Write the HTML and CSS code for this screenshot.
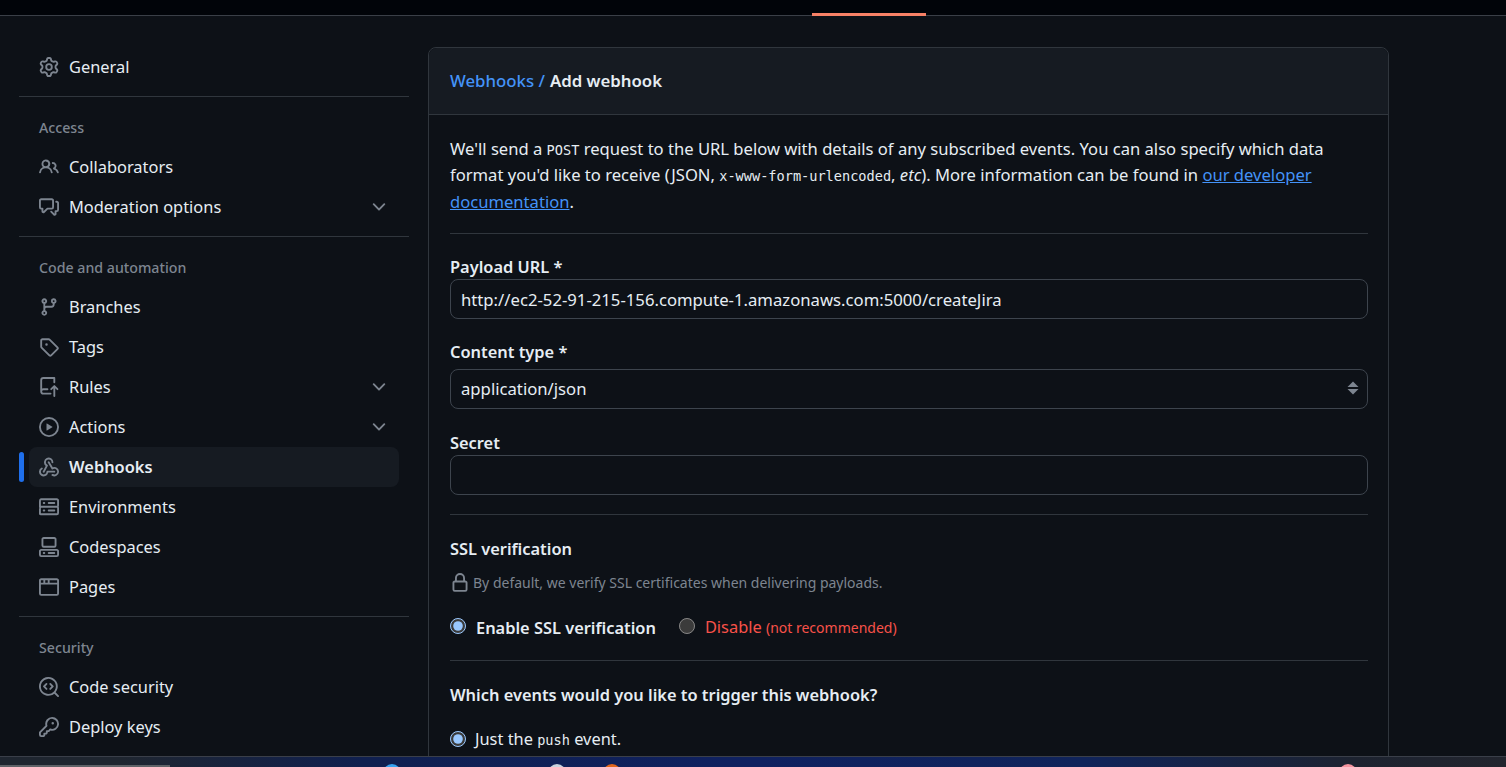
FILE: index.html
```html
<!DOCTYPE html>
<html lang="en">

<head>
    <meta charset="UTF-8">
    <meta name="viewport" content="width=device-width, initial-scale=1.0">
    <title>Add webhook</title>
    <link rel="stylesheet" href="styles.css">
</head>

<body>
    <header class="topbar">
        <span class="tab-marker"></span>
    </header>

    <div class="layout">
        <nav class="sidebar">
            <a class="nav-item" href="#">
                <svg class="icon" viewBox="0 0 16 16"><path d="M8 0a8.2 8.2 0 0 1 .701.031C9.444.095 9.99.645 10.16 1.29l.288 1.107c.018.066.079.158.212.224.231.114.454.243.668.386.123.082.233.09.299.071l1.103-.303c.644-.176 1.392.021 1.82.63.27.385.506.792.704 1.218.315.675.111 1.422-.364 1.891l-.814.806c-.049.048-.098.147-.088.294.016.257.016.515 0 .772-.01.147.038.246.088.294l.814.806c.475.469.679 1.216.364 1.891a7.977 7.977 0 0 1-.704 1.217c-.428.61-1.176.807-1.82.63l-1.102-.302c-.067-.019-.177-.011-.3.071a5.909 5.909 0 0 1-.668.386c-.133.066-.194.158-.211.224l-.29 1.106c-.168.646-.715 1.196-1.458 1.26a8.006 8.006 0 0 1-1.402 0c-.743-.064-1.289-.614-1.458-1.26l-.289-1.106c-.018-.066-.079-.158-.212-.224a5.738 5.738 0 0 1-.668-.386c-.123-.082-.233-.09-.299-.071l-1.103.303c-.644.176-1.392-.021-1.82-.63a8.12 8.12 0 0 1-.704-1.218c-.315-.675-.111-1.422.363-1.891l.815-.806c.05-.048.098-.147.088-.294a6.214 6.214 0 0 1 0-.772c.01-.147-.038-.246-.088-.294l-.815-.806C.635 6.045.431 5.298.746 4.623a7.92 7.92 0 0 1 .704-1.217c.428-.61 1.176-.807 1.82-.63l1.102.302c.067.019.177.011.3-.071.214-.143.437-.272.668-.386.133-.066.194-.158.211-.224l.29-1.106C6.009.645 6.556.095 7.299.03 7.53.01 7.764 0 8 0Zm-.571 1.525c-.036.003-.108.036-.137.146l-.289 1.105c-.147.561-.549.967-.998 1.189-.173.086-.34.183-.5.29-.417.278-.97.423-1.529.27l-1.103-.303c-.109-.03-.175.016-.195.045-.22.312-.412.644-.573.99-.014.031-.021.11.059.19l.815.806c.411.406.562.957.53 1.456a4.709 4.709 0 0 0 0 .582c.032.499-.119 1.05-.53 1.456l-.815.806c-.081.08-.073.159-.059.19.162.346.353.677.573.989.02.03.085.076.195.046l1.102-.303c.56-.153 1.113-.008 1.53.27.161.107.328.204.501.29.447.222.85.629.997 1.189l.289 1.105c.029.109.101.143.137.146a6.6 6.6 0 0 0 1.142 0c.036-.003.108-.036.137-.146l.289-1.105c.147-.561.549-.967.998-1.189.173-.086.34-.183.5-.29.417-.278.97-.423 1.529-.27l1.103.303c.109.029.175-.016.195-.045.22-.313.411-.644.573-.99.014-.031.021-.11-.059-.19l-.815-.806c-.411-.406-.562-.957-.53-1.456a4.709 4.709 0 0 0 0-.582c-.032-.499.119-1.05.53-1.456l.815-.806c.081-.08.073-.159.059-.19a6.464 6.464 0 0 0-.573-.989c-.02-.03-.085-.076-.195-.046l-1.102.303c-.56.153-1.113.008-1.53-.27a4.44 4.44 0 0 0-.501-.29c-.447-.222-.85-.629-.997-1.189l-.289-1.105c-.029-.11-.101-.143-.137-.146a6.6 6.6 0 0 0-1.142 0ZM11 8a3 3 0 1 1-6 0 3 3 0 0 1 6 0ZM9.5 8a1.5 1.5 0 1 0-3.001.001A1.5 1.5 0 0 0 9.5 8Z"/></svg>
                General
            </a>
            <hr class="nav-divider">

            <h2 class="nav-heading">Access</h2>
            <a class="nav-item" href="#">
                <svg class="icon" viewBox="0 0 16 16"><path d="M2 5.5a3.5 3.5 0 1 1 5.898 2.549 5.508 5.508 0 0 1 3.034 4.084.75.75 0 1 1-1.482.235 4 4 0 0 0-7.9 0 .75.75 0 0 1-1.482-.236A5.507 5.507 0 0 1 3.102 8.05 3.493 3.493 0 0 1 2 5.5ZM11 4a3.001 3.001 0 0 1 2.22 5.018 5.01 5.01 0 0 1 2.56 3.012.749.749 0 0 1-.885.954.752.752 0 0 1-.549-.514 3.507 3.507 0 0 0-2.522-2.372.75.75 0 0 1-.574-.73v-.352a.75.75 0 0 1 .416-.672A1.5 1.5 0 0 0 11 5.5.75.75 0 0 1 11 4Zm-5.5-.5a2 2 0 1 0-.001 3.999A2 2 0 0 0 5.5 3.5Z"/></svg>
                Collaborators
            </a>
            <a class="nav-item" href="#">
                <svg class="icon" viewBox="0 0 16 16"><path d="M1.75 1h8.5c.966 0 1.75.784 1.75 1.75v5.5A1.75 1.75 0 0 1 10.25 10H7.061l-2.574 2.573A1.458 1.458 0 0 1 2 11.543V10h-.25A1.75 1.75 0 0 1 0 8.25v-5.5C0 1.784.784 1 1.75 1ZM1.5 2.75v5.5c0 .138.112.25.25.25h1a.75.75 0 0 1 .75.75v2.19l2.72-2.72a.749.749 0 0 1 .53-.22h3.5a.25.25 0 0 0 .25-.25v-5.5a.25.25 0 0 0-.25-.25h-8.5a.25.25 0 0 0-.25.25Zm13 2a.25.25 0 0 0-.25-.25h-.5a.75.75 0 0 1 0-1.5h.5c.966 0 1.75.784 1.75 1.75v5.5A1.75 1.75 0 0 1 14.25 12H14v1.543a1.458 1.458 0 0 1-2.487 1.03L9.22 12.28a.749.749 0 0 1 .326-1.275.749.749 0 0 1 .734.215l2.22 2.22v-2.19a.75.75 0 0 1 .75-.75h1a.25.25 0 0 0 .25-.25Z"/></svg>
                Moderation options
                <svg class="icon chevron" viewBox="0 0 16 16"><path d="M12.78 5.22a.749.749 0 0 1 0 1.06l-4.25 4.25a.749.749 0 0 1-1.06 0L3.22 6.28a.749.749 0 1 1 1.06-1.06L8 8.939l3.72-3.719a.749.749 0 0 1 1.06 0Z"/></svg>
            </a>
            <hr class="nav-divider">

            <h2 class="nav-heading">Code and automation</h2>
            <a class="nav-item" href="#">
                <svg class="icon" viewBox="0 0 16 16"><path d="M9.5 3.25a2.25 2.25 0 1 1 3 2.122V6A2.5 2.5 0 0 1 10 8.5H6a1 1 0 0 0-1 1v1.128a2.251 2.251 0 1 1-1.5 0V5.372a2.25 2.25 0 1 1 1.5 0v1.836A2.493 2.493 0 0 1 6 7h4a1 1 0 0 0 1-1v-.628A2.25 2.25 0 0 1 9.5 3.25Zm-6 0a.75.75 0 1 0 1.5 0 .75.75 0 0 0-1.5 0Zm8.25-.75a.75.75 0 1 0 0 1.5.75.75 0 0 0 0-1.5ZM4.25 12a.75.75 0 1 0 0 1.5.75.75 0 0 0 0-1.5Z"/></svg>
                Branches
            </a>
            <a class="nav-item" href="#">
                <svg class="icon" viewBox="0 0 16 16"><path d="M1 7.775V2.75C1 1.784 1.784 1 2.75 1h5.025c.464 0 .91.184 1.238.513l6.25 6.25a1.75 1.75 0 0 1 0 2.474l-5.026 5.026a1.75 1.75 0 0 1-2.474 0l-6.25-6.25A1.752 1.752 0 0 1 1 7.775Zm1.5 0c0 .066.026.13.073.177l6.25 6.25a.25.25 0 0 0 .354 0l5.025-5.025a.25.25 0 0 0 0-.354l-6.25-6.25a.25.25 0 0 0-.177-.073H2.75a.25.25 0 0 0-.25.25ZM6 5a1 1 0 1 1 0 2 1 1 0 0 1 0-2Z"/></svg>
                Tags
            </a>
            <a class="nav-item" href="#">
                <svg class="icon" viewBox="0 0 16 16"><path d="M1 2.5A2.5 2.5 0 0 1 3.5 0h8.75a.75.75 0 0 1 .75.75v3.5a.75.75 0 0 1-1.5 0V1.5h-8a1 1 0 0 0-1 1v6.708A2.493 2.493 0 0 1 3.5 9h3.25a.75.75 0 0 1 0 1.5H3.5a1 1 0 0 0 0 2h5.75a.75.75 0 0 1 0 1.5H3.5A2.5 2.5 0 0 1 1 11.5Zm13.23 7.79h-.001l-1.224-1.224v6.184a.75.75 0 0 1-1.5 0V9.066L10.28 10.29a.75.75 0 0 1-1.06-1.061l2.505-2.504a.75.75 0 0 1 1.06 0L15.29 9.23a.751.751 0 0 1-.018 1.042.751.751 0 0 1-1.042.018Z"/></svg>
                Rules
                <svg class="icon chevron" viewBox="0 0 16 16"><path d="M12.78 5.22a.749.749 0 0 1 0 1.06l-4.25 4.25a.749.749 0 0 1-1.06 0L3.22 6.28a.749.749 0 1 1 1.06-1.06L8 8.939l3.72-3.719a.749.749 0 0 1 1.06 0Z"/></svg>
            </a>
            <a class="nav-item" href="#">
                <svg class="icon" viewBox="0 0 16 16"><path d="M8 0a8 8 0 1 1 0 16A8 8 0 0 1 8 0ZM1.5 8a6.5 6.5 0 1 0 13 0 6.5 6.5 0 0 0-13 0Zm4.879-2.773 4.264 2.559a.25.25 0 0 1 0 .428l-4.264 2.559A.25.25 0 0 1 6 10.559V5.442a.25.25 0 0 1 .379-.215Z"/></svg>
                Actions
                <svg class="icon chevron" viewBox="0 0 16 16"><path d="M12.78 5.22a.749.749 0 0 1 0 1.06l-4.25 4.25a.749.749 0 0 1-1.06 0L3.22 6.28a.749.749 0 1 1 1.06-1.06L8 8.939l3.72-3.719a.749.749 0 0 1 1.06 0Z"/></svg>
            </a>
            <a class="nav-item active" href="#">
                <svg class="icon" viewBox="0 0 16 16"><path d="M5.5 4.25a2.25 2.25 0 0 1 4.5 0 .75.75 0 0 0 1.5 0 3.75 3.75 0 1 0-6.14 2.889l-2.272 4.258a.75.75 0 0 0 1.324.706L7 7.25a.75.75 0 0 0-.309-1.015A2.25 2.25 0 0 1 5.5 4.25Z"/><path d="M7.364 3.607a.75.75 0 0 1 1.03.257l2.608 4.349a3.75 3.75 0 1 1-.628 6.785.75.75 0 0 1 .752-1.299 2.25 2.25 0 1 0-.033-3.88.75.75 0 0 1-1.03-.256L7.107 4.636a.75.75 0 0 1 .257-1.03Z"/><path d="M2.9 8.776A.75.75 0 0 1 2.625 9.8 2.25 2.25 0 1 0 6 11.75a.75.75 0 0 1 .75-.751h5.5a.75.75 0 0 1 0 1.5H7.425a3.751 3.751 0 1 1-5.55-3.998.75.75 0 0 1 1.024.274Z"/></svg>
                Webhooks
            </a>
            <a class="nav-item" href="#">
                <svg class="icon" viewBox="0 0 16 16"><path d="M1.75 1h12.5c.966 0 1.75.784 1.75 1.75v4c0 .372-.116.717-.314 1 .198.283.314.628.314 1v4a1.75 1.75 0 0 1-1.75 1.75H1.75A1.75 1.75 0 0 1 0 13.75v-4c0-.372.116-.717.314-1a1.739 1.739 0 0 1-.314-1v-4C0 1.784.784 1 1.75 1ZM1.5 2.75v4c0 .138.112.25.25.25h12.5a.25.25 0 0 0 .25-.25v-4a.25.25 0 0 0-.25-.25H1.75a.25.25 0 0 0-.25.25Zm.25 5.75a.25.25 0 0 0-.25.25v4c0 .138.112.25.25.25h12.5a.25.25 0 0 0 .25-.25v-4a.25.25 0 0 0-.25-.25ZM7 4.75A.75.75 0 0 1 7.75 4h4.5a.75.75 0 0 1 0 1.5h-4.5A.75.75 0 0 1 7 4.75ZM7.75 10h4.5a.75.75 0 0 1 0 1.5h-4.5a.75.75 0 0 1 0-1.5ZM3 4.75A.75.75 0 0 1 3.75 4h.5a.75.75 0 0 1 0 1.5h-.5A.75.75 0 0 1 3 4.75ZM3.75 10h.5a.75.75 0 0 1 0 1.5h-.5a.75.75 0 0 1 0-1.5Z"/></svg>
                Environments
            </a>
            <a class="nav-item" href="#">
                <svg class="icon" viewBox="0 0 16 16"><path d="M0 11.25c0-.966.784-1.75 1.75-1.75h12.5c.966 0 1.75.784 1.75 1.75v3A1.75 1.75 0 0 1 14.25 16H1.75A1.75 1.75 0 0 1 0 14.25Zm2-9.5C2 .784 2.784 0 3.75 0h8.5C13.216 0 14 .784 14 1.75v5a1.75 1.75 0 0 1-1.75 1.75h-8.5A1.75 1.75 0 0 1 2 6.75Zm1.75-.25a.25.25 0 0 0-.25.25v5c0 .138.112.25.25.25h8.5a.25.25 0 0 0 .25-.25v-5a.25.25 0 0 0-.25-.25Zm-2 9.5a.25.25 0 0 0-.25.25v3c0 .138.112.25.25.25h12.5a.25.25 0 0 0 .25-.25v-3a.25.25 0 0 0-.25-.25Z"/><path d="M7 12.75a.75.75 0 0 1 .75-.75h4.5a.75.75 0 0 1 0 1.5h-4.5a.75.75 0 0 1-.75-.75Zm-4 0a.75.75 0 0 1 .75-.75h.5a.75.75 0 0 1 0 1.5h-.5a.75.75 0 0 1-.75-.75Z"/></svg>
                Codespaces
            </a>
            <a class="nav-item" href="#">
                <svg class="icon" viewBox="0 0 16 16"><path d="M0 2.75C0 1.784.784 1 1.75 1h12.5c.966 0 1.75.784 1.75 1.75v10.5A1.75 1.75 0 0 1 14.25 15H1.75A1.75 1.75 0 0 1 0 13.25ZM14.5 6h-13v7.25c0 .138.112.25.25.25h12.5a.25.25 0 0 0 .25-.25Zm-6-3.5v2h6V2.75a.25.25 0 0 0-.25-.25ZM5 2.5v2h2v-2Zm-3.25 0a.25.25 0 0 0-.25.25V4.5h2v-2Z"/></svg>
                Pages
            </a>
            <hr class="nav-divider">

            <h2 class="nav-heading">Security</h2>
            <a class="nav-item" href="#">
                <svg class="icon" viewBox="0 0 16 16"><path d="M8.47 4.97a.75.75 0 0 0 0 1.06L9.94 7.5 8.47 8.97a.75.75 0 1 0 1.06 1.06l2-2a.75.75 0 0 0 0-1.06l-2-2a.75.75 0 0 0-1.06 0ZM6.53 6.03a.75.75 0 0 0-1.06-1.06l-2 2a.75.75 0 0 0 0 1.06l2 2a.75.75 0 1 0 1.06-1.06L5.06 7.5l1.47-1.47Z"/><path d="M12.246 13.307a7.501 7.501 0 1 1 1.06-1.06l2.474 2.473a.749.749 0 0 1-.326 1.275.749.749 0 0 1-.734-.215ZM1.5 7.5a6.002 6.002 0 0 0 3.664 5.53 6.002 6.002 0 0 0 6.575-1.3A6 6 0 1 0 1.5 7.5Z"/></svg>
                Code security
            </a>
            <a class="nav-item" href="#">
                <svg class="icon" viewBox="0 0 16 16"><path d="M10.5 0a5.499 5.499 0 1 1-1.288 10.848l-.932.932a.749.749 0 0 1-.53.22H7v.75a.749.749 0 0 1-.22.53l-.5.5a.749.749 0 0 1-.53.22H5v.75a.749.749 0 0 1-.22.53l-.5.5a.749.749 0 0 1-.53.22h-2A1.75 1.75 0 0 1 0 14.25v-2c0-.199.079-.389.22-.53l4.932-4.932A5.5 5.5 0 0 1 10.5 0Zm-4 5.5c-.001.431.069.86.205 1.269a.75.75 0 0 1-.181.768L1.5 12.56v1.69c0 .138.112.25.25.25h1.69l.06-.06v-1.19a.75.75 0 0 1 .75-.75h1.19l.06-.06v-1.19a.75.75 0 0 1 .75-.75h1.19l1.023-1.025a.75.75 0 0 1 .768-.18A4 4 0 1 0 6.5 5.5ZM11 6a1 1 0 1 1 0-2 1 1 0 0 1 0 2Z"/></svg>
                Deploy keys
            </a>
        </nav>

        <main class="card">
            <div class="card-header">
                <a class="crumb" href="#">Webhooks /</a> <span class="crumb-current">Add webhook</span>
            </div>

            <form class="card-body">
                <p class="intro">We'll send a <code>POST</code> request to the URL below with details of any subscribed events. You can also specify which data format you'd like to receive (JSON, <code>x-www-form-urlencoded</code>, <em>etc</em>). More information can be found in <a href="#">our developer documentation</a>.</p>
                <hr class="section-divider">

                <label class="field-label" for="payload-url">Payload URL *</label>
                <input class="field" type="text" id="payload-url" value="http://ec2-52-91-215-156.compute-1.amazonaws.com:5000/createJira">

                <label class="field-label" for="content-type">Content type *</label>
                <div class="select-wrap">
                    <select class="field" id="content-type">
                        <option>application/json</option>
                    </select>
                    <svg class="select-arrows" viewBox="0 0 12 14"><path d="M6 0.5 11.5 6H0.5Z"/><path d="M6 13.5 0.5 8H11.5Z"/></svg>
                </div>

                <label class="field-label" for="secret">Secret</label>
                <input class="field" type="text" id="secret">
                <hr class="section-divider">

                <h3 class="section-title">SSL verification</h3>
                <p class="note">
                    <svg class="icon" viewBox="0 0 16 16"><path d="M4 4a4 4 0 0 1 8 0v2h.25c.966 0 1.75.784 1.75 1.75v5.5A1.75 1.75 0 0 1 12.25 15h-8.5A1.75 1.75 0 0 1 2 13.25v-5.5C2 6.784 2.784 6 3.75 6H4Zm8.25 3.5h-8.5a.25.25 0 0 0-.25.25v5.5c0 .138.112.25.25.25h8.5a.25.25 0 0 0 .25-.25v-5.5a.25.25 0 0 0-.25-.25ZM10.5 6V4a2.5 2.5 0 1 0-5 0v2Z"/></svg>
                    By default, we verify SSL certificates when delivering payloads.
                </p>
                <div class="radio-row">
                    <label class="radio strong"><input type="radio" name="ssl" checked> <span>Enable SSL verification</span></label>
                    <label class="radio danger"><input type="radio" name="ssl"> <span>Disable <small>(not recommended)</small></span></label>
                </div>
                <hr class="section-divider">

                <h3 class="section-title">Which events would you like to trigger this webhook?</h3>
                <label class="radio event"><input type="radio" name="events" checked> <span>Just the <code>push</code> event.</span></label>
            </form>
        </main>
    </div>

    <footer class="taskbar">
        <span class="task-strip"></span>
        <span class="task-dot dot-blue"></span>
        <span class="task-dot dot-white"></span>
        <span class="task-dot dot-orange"></span>
        <span class="task-dot dot-pink"></span>
    </footer>
</body>

</html>
```
FILE: styles.css
```css
/* General Body Styling */
html,
body {
    height: 100%;
}

body {
    margin: 0;
    display: flex;
    flex-direction: column;
    overflow: hidden;
    background: #0d1117;
    color: #e6edf3;
    font-family: "Noto Sans", sans-serif;
    font-size: 16.4px;
    line-height: 26.25px;
    color-scheme: dark;
}

a {
    text-decoration: none;
}

code {
    font-family: "DejaVu Sans Mono", monospace;
    font-size: 13.6px;
    line-height: 1;
}

/* Top Bar */
.topbar {
    flex: none;
    height: 15px;
    background: #010409;
    border-bottom: 1px solid #3a3f47;
    display: flex;
    align-items: flex-end;
    padding-left: 812px;
}

.tab-marker {
    width: 114px;
    height: 3px;
    margin-bottom: -1px;
    background: #f78166;
}

/* Page Layout */
.layout {
    flex: 1;
    min-height: 0;
    display: flex;
    align-items: flex-start;
    gap: 19px;
    padding: 31px 0 0 19px;
    overflow: hidden;
}

/* Sidebar */
.sidebar {
    flex: none;
    width: 390px;
}

.nav-item {
    position: relative;
    display: flex;
    align-items: center;
    gap: 10px;
    height: 40px;
    margin: 0 10px;
    padding: 0 10px;
    border-radius: 8px;
    color: #e6edf3;
}

.nav-item.active {
    background: #161b22;
    font-weight: 600;
}

.nav-item.active::before {
    content: "";
    position: absolute;
    left: -10px;
    top: 5px;
    width: 5px;
    height: 30px;
    border-radius: 3px;
    background: #1f6feb;
}

.icon {
    flex: none;
    width: 20px;
    height: 20px;
    fill: #7d8590;
}

.chevron {
    margin-left: auto;
}

.nav-divider {
    height: 1px;
    margin: 9px 0 0;
    border: 0;
    background: #30363d;
}

.nav-heading {
    margin: 0;
    padding: 21px 20px 9px;
    color: #7d8590;
    font-size: 14.2px;
    font-weight: 500;
    line-height: 20px;
}

/* Card */
.card {
    flex: none;
    width: 959px;
    height: 1000px;
    border: 1px solid #30363d;
    border-radius: 8px;
}

.card-header {
    height: 66px;
    padding: 0 20px 0 21px;
    display: flex;
    align-items: center;
    gap: 5px;
    background: #161b22;
    border-bottom: 1px solid #30363d;
    border-radius: 8px 8px 0 0;
    font-size: 16.8px;
}

.crumb {
    color: #4493f8;
    font-weight: 500;
}

.crumb-current {
    font-weight: 600;
}

.card-body {
    padding: 21px 20px 21px 21px;
}

.intro {
    margin: 0;
    font-size: 16.6px;
}

.intro a {
    color: #4493f8;
    text-decoration: underline;
}

.intro em {
    font-style: italic;
}

.section-divider {
    height: 1px;
    margin: 19px 0 0;
    border: 0;
    background: #30363d;
}

.intro + .section-divider {
    margin-top: 18px;
}

/* Form Fields */
.field-label {
    display: block;
    margin-top: 20px;
    font-weight: 600;
}

.field {
    display: block;
    box-sizing: border-box;
    width: 100%;
    height: 40px;
    margin-top: -1px;
    padding: 0 10px;
    background: #0d1117;
    border: 1px solid #3d444d;
    border-radius: 8px;
    color: #e6edf3;
    font: inherit;
    font-size: 16.7px;
    appearance: none;
    outline: none;
}

.select-wrap {
    position: relative;
    margin-top: 4px;
    margin-bottom: 21px;
}

.select-wrap .field {
    margin-top: 0;
}

.select-wrap + .field-label {
    margin-top: 0;
}

.select-wrap + .field-label + .field {
    margin-top: -2px;
}

.select-arrows {
    position: absolute;
    right: 9px;
    top: 12px;
    width: 12px;
    height: 14px;
    fill: #7d8590;
}

.section-title {
    margin: 21px 0 0;
    font-size: inherit;
    font-weight: 600;
}

.note {
    margin: 8px 0 0;
    display: flex;
    align-items: center;
    gap: 3px;
    color: #7d8590;
    font-size: 14px;
}

/* Radios */
.radio-row {
    display: flex;
    gap: 23px;
    margin-top: 18px;
}

.radio {
    display: flex;
    align-items: center;
}

.radio input {
    width: 16px;
    height: 16px;
    margin: 0 10px 3px 0;
}

.strong {
    font-weight: 600;
}

.danger {
    color: #f85149;
}

.danger small {
    font-size: 14px;
}

.event {
    margin-top: 17px;
}

.event input {
    margin-right: 9px;
    margin-bottom: 0;
}

/* Taskbar */
.taskbar {
    flex: none;
    position: relative;
    height: 10px;
    overflow: hidden;
    border-top: 1px solid #3a3f49;
    background: linear-gradient(90deg, #1f2630 0, #1f2630 8%, #10204f 24%, #0f2160 50%, #10245a 72%, #1d2330 90%, #22252e 100%);
}

.task-strip {
    position: absolute;
    left: 0;
    bottom: 0;
    width: 170px;
    height: 2px;
    background: #5f6368;
}

.task-dot {
    position: absolute;
    top: 7px;
    width: 18px;
    height: 18px;
    border-radius: 50%;
}

.dot-blue {
    left: 383px;
    background: #38a3f1;
}

.dot-white {
    left: 548px;
    background: #c9d3de;
}

.dot-orange {
    left: 603px;
    background: #e2661c;
}

.dot-pink {
    left: 1339px;
    background: #f5949f;
}
```
